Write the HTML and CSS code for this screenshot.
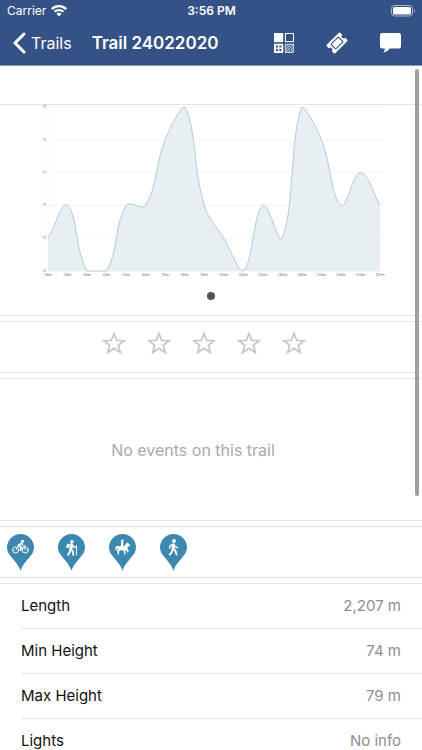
FILE: index.html
```html
<!DOCTYPE html>
<html lang="en">
<head>
    <meta charset="UTF-8" />
    <meta name="viewport" content="width=device-width, initial-scale=1.0" />
    <title>Trail 24022020</title>
    <link rel="stylesheet" href="styles.css">
</head>
<body>
    <header class="header">
        <div class="status">
            <div class="carrier">
                <span>Carrier</span>
                <svg width="16" height="12" viewBox="0 0 16 12" fill="#fff">
                    <path d="M8 0C4.900 0 2.100 1.200 0 3.200L1.600 4.900A9.300 9.300 0 0 1 14.400 4.900L16 3.200C13.900 1.200 11.100 0 8 0Z" />
                    <path d="M8 4C6 4 4.200 4.700 2.800 6L4.400 7.600A5.200 5.200 0 0 1 11.600 7.600L13.200 6C11.800 4.700 10 4 8 4Z" />
                    <path d="M8 7.700C7 7.700 6.100 8.100 5.400 8.700L8 11.400L10.600 8.700C9.900 8.100 9 7.700 8 7.700Z" />
                </svg>
            </div>
            <div class="time">3:56 PM</div>
            <div class="battery">
                <svg width="25" height="12" viewBox="0 0 25 12">
                    <rect x="0.500" y="0.500" width="21" height="10.500" rx="3" fill="none" stroke="#a9b6d0" />
                    <rect x="2" y="2" width="18" height="7.500" rx="1.600" fill="#fff" />
                    <path d="M23 4V7.500C24.400 7 24.400 4.500 23 4Z" fill="#a9b6d0" />
                </svg>
            </div>
        </div>
        <nav class="nav">
            <a class="back" href="#">
                <svg width="13" height="22" viewBox="0 0 13 22" fill="none" stroke="#fff" stroke-width="3" stroke-linecap="round" stroke-linejoin="round">
                    <path d="M11 2L2 11L11 20" />
                </svg>
                <span>Trails</span>
            </a>
            <h1 class="title">Trail 24022020</h1>
            <div class="actions">
                <button type="button" aria-label="Codes">
                    <svg width="20" height="20" viewBox="0 0 20 20">
                        <rect width="9.200" height="9.200" fill="#fff" />
                        <rect x="11.400" y="0.500" width="8.100" height="8.100" fill="none" stroke="#fff" />
                        <rect y="10.800" width="9.200" height="9.200" fill="#fff" />
                        <path d="M2 12.500h2v2H2zM5.400 12.500h2v2h-2zM2 16h2v2H2zM5.400 16h2v2h-2z" fill="#355287" />
                        <rect x="11.200" y="11.100" width="8.500" height="8.500" fill="none" stroke="#fff" stroke-width="0.600" />
                        <path d="M11 14.500L14.500 11M11 17.300L17.300 11M11 20L20 11M13.700 20L20 13.700M16.500 20L20 16.500" stroke="#fff" stroke-width="1" />
                    </svg>
                </button>
                <button type="button" aria-label="Tickets">
                    <svg width="22" height="22" viewBox="0 0 22 22">
                        <g transform="rotate(-45 11 11)">
                            <path d="M2.500 5H19.500Q20.500 5 20.500 6V8.800A2.200 2.200 0 0 0 20.500 13.200V16Q20.500 17 19.500 17H2.500Q1.500 17 1.500 16V13.200A2.200 2.200 0 0 0 1.500 8.800V6Q1.500 5 2.500 5Z" fill="#fff" />
                            <rect x="5.800" y="7.600" width="10.400" height="6.800" rx="0.500" fill="none" stroke="#355287" stroke-width="1.100" />
                        </g>
                    </svg>
                </button>
                <button type="button" aria-label="Comments">
                    <svg width="21" height="20" viewBox="0 0 21 20" fill="#fff">
                        <path d="M2.300 0H18.700Q21 0 21 2.300V13.200Q21 15.500 18.700 15.500H9.500C8.500 17.500 6.300 19.200 3.200 19.400C4.500 18.200 4.900 17 4.800 15.500H2.300Q0 15.500 0 13.200V2.300Q0 0 2.300 0Z" />
                    </svg>
                </button>
            </div>
        </nav>
    </header>

    <main class="content">
        <section class="card chart-card">
            <svg id="chart" viewBox="0 0 422 175"></svg>
            <div class="pager"><span class="dot"></span></div>
        </section>

        <section class="card rating" id="rating"></section>

        <section class="card events">
            <p>No events on this trail</p>
        </section>

        <section class="card pins">
            <svg width="27" height="37" viewBox="0 0 27 37" role="img" aria-label="Cycling">
                <path class="pin" d="M13.500 0A13.500 13.500 0 0 0 0 13.500C0 22 9.500 25.500 13.500 36.500C17.500 25.500 27 22 27 13.500A13.500 13.500 0 0 0 13.500 0Z" />
                <g fill="none" stroke="#fff" stroke-linecap="round" stroke-linejoin="round">
                    <circle cx="8.700" cy="16" r="3" stroke-width="1" />
                    <circle cx="18.300" cy="16" r="3" stroke-width="1" />
                    <path d="M14.700 9.200L11.300 11.600L14.200 13.200L13.300 16.200" stroke-width="1.900" />
                    <path d="M15 9.600L16.300 11.700H18.300M9 16L11 12.800M14 16L17 12.500L18.300 16" stroke-width="1" />
                </g>
                <circle cx="15.500" cy="7.300" r="1.600" fill="#fff" />
            </svg>
            <svg width="27" height="37" viewBox="0 0 27 37" role="img" aria-label="Hiking">
                <path class="pin" d="M13.500 0A13.500 13.500 0 0 0 0 13.500C0 22 9.500 25.500 13.500 36.500C17.500 25.500 27 22 27 13.500A13.500 13.500 0 0 0 13.500 0Z" />
                <circle cx="14" cy="7.700" r="1.800" fill="#fff" />
                <path d="M9.300 9.500L11.600 10.400L10.600 14.200L8 13.200Z" fill="#fff" />
                <g fill="none" stroke="#fff" stroke-linecap="round" stroke-linejoin="round">
                    <path d="M13.200 10.900L12.900 14.800" stroke-width="3.200" />
                    <path d="M12.400 15.500L11.800 18L10.200 20.800M13.200 15.500L15 17.600L15.400 20.800" stroke-width="1.900" />
                    <path d="M14.200 10.700L15.800 13L18 13.200" stroke-width="1.400" />
                    <path d="M18.500 11.500V21" stroke-width="0.900" />
                </g>
            </svg>
            <svg width="27" height="37" viewBox="0 0 27 37" role="img" aria-label="Horse riding">
                <path class="pin" d="M13.500 0A13.500 13.500 0 0 0 0 13.500C0 22 9.500 25.500 13.500 36.500C17.500 25.500 27 22 27 13.500A13.500 13.500 0 0 0 13.500 0Z" />
                <path d="M6.400 14.500C6.400 12.400 7.800 11.900 9.500 12L15.300 12.200L17.200 9.400L18.700 8.400L21.200 11.300L20.300 12.400L18.800 12L18.400 15L20 16.800L18.600 18.600L17.800 18L18.300 17L16.300 16.300L16.600 20.600H15.300L14.600 16.500L11.200 16.300L9.800 17.800L10.400 20.600H9L8 17.300L8.700 15.500L8 13.800L7.400 16.500H6.400Z" fill="#fff" />
                <circle cx="13.300" cy="7" r="1.400" fill="#fff" />
                <path d="M13.200 9.300L13 12.500" fill="none" stroke="#fff" stroke-width="2.400" stroke-linecap="round" />
            </svg>
            <svg width="27" height="37" viewBox="0 0 27 37" role="img" aria-label="Walking">
                <path class="pin" d="M13.500 0A13.500 13.500 0 0 0 0 13.500C0 22 9.500 25.500 13.500 36.500C17.500 25.500 27 22 27 13.500A13.500 13.500 0 0 0 13.500 0Z" />
                <circle cx="14" cy="7" r="1.900" fill="#fff" />
                <g fill="none" stroke="#fff" stroke-linecap="round" stroke-linejoin="round">
                    <path d="M13.400 11L13.100 14.300" stroke-width="3" />
                    <path d="M12.800 14.900L12 17.800L9.800 20.600M13.500 14.700L15.600 17L16.500 20.600" stroke-width="1.900" />
                    <path d="M12.900 10.300L10.200 11.700L9.600 14M14 10.500L15.300 12.600L17.500 13.700" stroke-width="1.400" />
                </g>
            </svg>
        </section>

        <dl class="info">
            <div class="row"><dt>Length</dt><dd>2,207 m</dd></div>
            <div class="row"><dt>Min Height</dt><dd>74 m</dd></div>
            <div class="row"><dt>Max Height</dt><dd>79 m</dd></div>
            <div class="row"><dt>Lights</dt><dd>No info</dd></div>
        </dl>
    </main>
    <div class="scroll-thumb"></div>

    <script src="script.js"></script>
</body>
</html>
```

FILE: styles.css
```css
* {
    box-sizing: border-box;
}
body {
    margin: 0;
    height: 100vh;
    display: flex;
    flex-direction: column;
    position: relative;
    overflow: hidden;
    background-color: #fff;
    font-family: Inter, "Liberation Sans", sans-serif;
    font-size: 16px;
    color: #111;
}
svg {
    display: block;
}

/* header */
.header {
    flex: none;
    background-color: #355287;
    border-bottom: 1px solid #8798b8;
    color: #fff;
}
.status {
    display: grid;
    grid-template-columns: 1fr auto 1fr;
    align-items: center;
    height: 21px;
    padding: 0 6px 0 7px;
    font-size: 12px;
}
.carrier {
    display: flex;
    align-items: center;
    gap: 5px;
}
.time {
    font-weight: 600;
}
.battery {
    display: flex;
    justify-content: flex-end;
}
.nav {
    display: flex;
    align-items: center;
    height: 44px;
    padding: 0 21px 0 13px;
}
.back {
    display: flex;
    align-items: center;
    gap: 5px;
    color: #fff;
    font-size: 16px;
    text-decoration: none;
}
.title {
    margin: 0 0 0 20px;
    font-size: 17px;
    font-weight: 600;
}
.actions {
    display: flex;
    align-items: center;
    gap: 32px;
    margin-left: auto;
}
.actions button {
    padding: 0;
    border: none;
    background: none;
    cursor: pointer;
}

/* content */
.content {
    flex: 1;
    min-height: 0;
    padding-top: 38px;
    overflow-y: auto;
    scrollbar-width: none;
}
.card {
    margin-bottom: 5px;
    border-top: 1px solid #e4e5e7;
    border-bottom: 1px solid #e4e5e7;
}
#chart {
    width: 100%;
}
#chart text {
    font-family: "Liberation Sans", sans-serif;
    font-size: 3px;
    fill: #666;
}
.grid-line {
    stroke: #f3f4f5;
    stroke-width: 1;
}
.area {
    fill: #e7eff3;
}
.line {
    fill: none;
    stroke: #b3cad7;
    stroke-width: 1;
}
.pager {
    display: flex;
    justify-content: center;
    padding: 12px 0 15px;
}
.dot {
    width: 8px;
    height: 8px;
    border-radius: 50%;
    background-color: #555;
}
.rating {
    display: flex;
    justify-content: center;
    gap: 21px;
    padding: 9px 14px 17px 0;
}
.star {
    padding: 0;
    border: none;
    background: none;
    cursor: pointer;
}
.events {
    padding: 59px 36px 58px 0;
    text-align: center;
}
.events p {
    margin: 0;
    line-height: 24px;
    color: #aaa;
}
.pins {
    display: flex;
    gap: 24px;
    padding: 7px 7px 6px;
}
.pin {
    fill: #3d87b0;
}
.info {
    margin: 0;
    padding-left: 21px;
    border-top: 1px solid #e4e5e7;
}
.row {
    display: flex;
    align-items: center;
    justify-content: space-between;
    height: 45px;
    padding: 0 21px 1px 0;
    border-bottom: 1px solid #e4e5e7;
    font-size: 15px;
}
.row dd {
    margin: 0;
    color: #8e8e93;
}
.scroll-thumb {
    position: absolute;
    top: 69px;
    right: 3px;
    width: 4px;
    height: 427px;
    border-radius: 2px;
    background-color: #a0a0a0;
}
```

FILE: script.js
```javascript
const heights = [75, 76, 74, 74, 76, 76, 78, 79, 76, 75, 74, 76, 75, 79, 78, 76, 77, 76];
const left = 48, right = 380, top_ = 2, bottom = 166;
const tension = 0.4;

function yFor(h) {
    return bottom - (h - 74) * (bottom - top_) / 5;
}

function clamp(y) {
    return Math.max(top_, Math.min(bottom, y));
}

const points = heights.map((h, i) => ({
    x: left + i * (right - left) / (heights.length - 1),
    y: yFor(h)
}));

// control points on both sides of every point
points.forEach((p, i) => {
    const prev = points[i - 1] || p;
    const next = points[i + 1] || p;
    const d1 = Math.hypot(p.x - prev.x, p.y - prev.y);
    const d2 = Math.hypot(next.x - p.x, next.y - p.y);
    const a = tension * d1 / (d1 + d2);
    const b = tension * d2 / (d1 + d2);
    p.c1 = { x: p.x - a * (next.x - prev.x), y: clamp(p.y - a * (next.y - prev.y)) };
    p.c2 = { x: p.x + b * (next.x - prev.x), y: clamp(p.y + b * (next.y - prev.y)) };
});

let line = `M${points[0].x} ${points[0].y}`;
for (let i = 1; i < points.length; i++) {
    const p = points[i - 1], q = points[i];
    line += `C${p.c2.x} ${p.c2.y} ${q.c1.x} ${q.c1.y} ${q.x} ${q.y}`;
}

let out = "";
for (let h = 74; h <= 79; h++) {
    out += `<path class="grid-line" d="M${left} ${yFor(h)}H384" />`;
    out += `<text x="46" y="${yFor(h) + 1}" text-anchor="end">${h}</text>`;
}
out += `<path class="grid-line" d="M${left} ${top_}V${bottom}" />`;
out += `<path class="area" d="${line}V${bottom}H${left}Z" />`;
out += `<path class="line" d="${line}" />`;
points.forEach((p, i) => {
    const label = i === points.length - 1 ? "2207m" : (i + 1) * 100 + "m";
    out += `<text x="${p.x}" y="171" text-anchor="middle">${label}</text>`;
});
document.getElementById("chart").innerHTML = out;

// rating stars
let stars = "";
for (let i = 1; i <= 5; i++) {
    stars += `<button type="button" class="star" aria-label="Rate ${i}">
        <svg width="24" height="24" viewBox="0 0 24 24" fill="none" stroke="#c7c7cc" stroke-width="1.8">
            <path d="M12 2.500L14.700 9.300L22 9.700L16.400 14.300L18.300 21.400L12 17.400L5.700 21.400L7.600 14.300L2 9.700L9.300 9.300Z" />
        </svg>
    </button>`;
}
document.getElementById("rating").innerHTML = stars;
```
